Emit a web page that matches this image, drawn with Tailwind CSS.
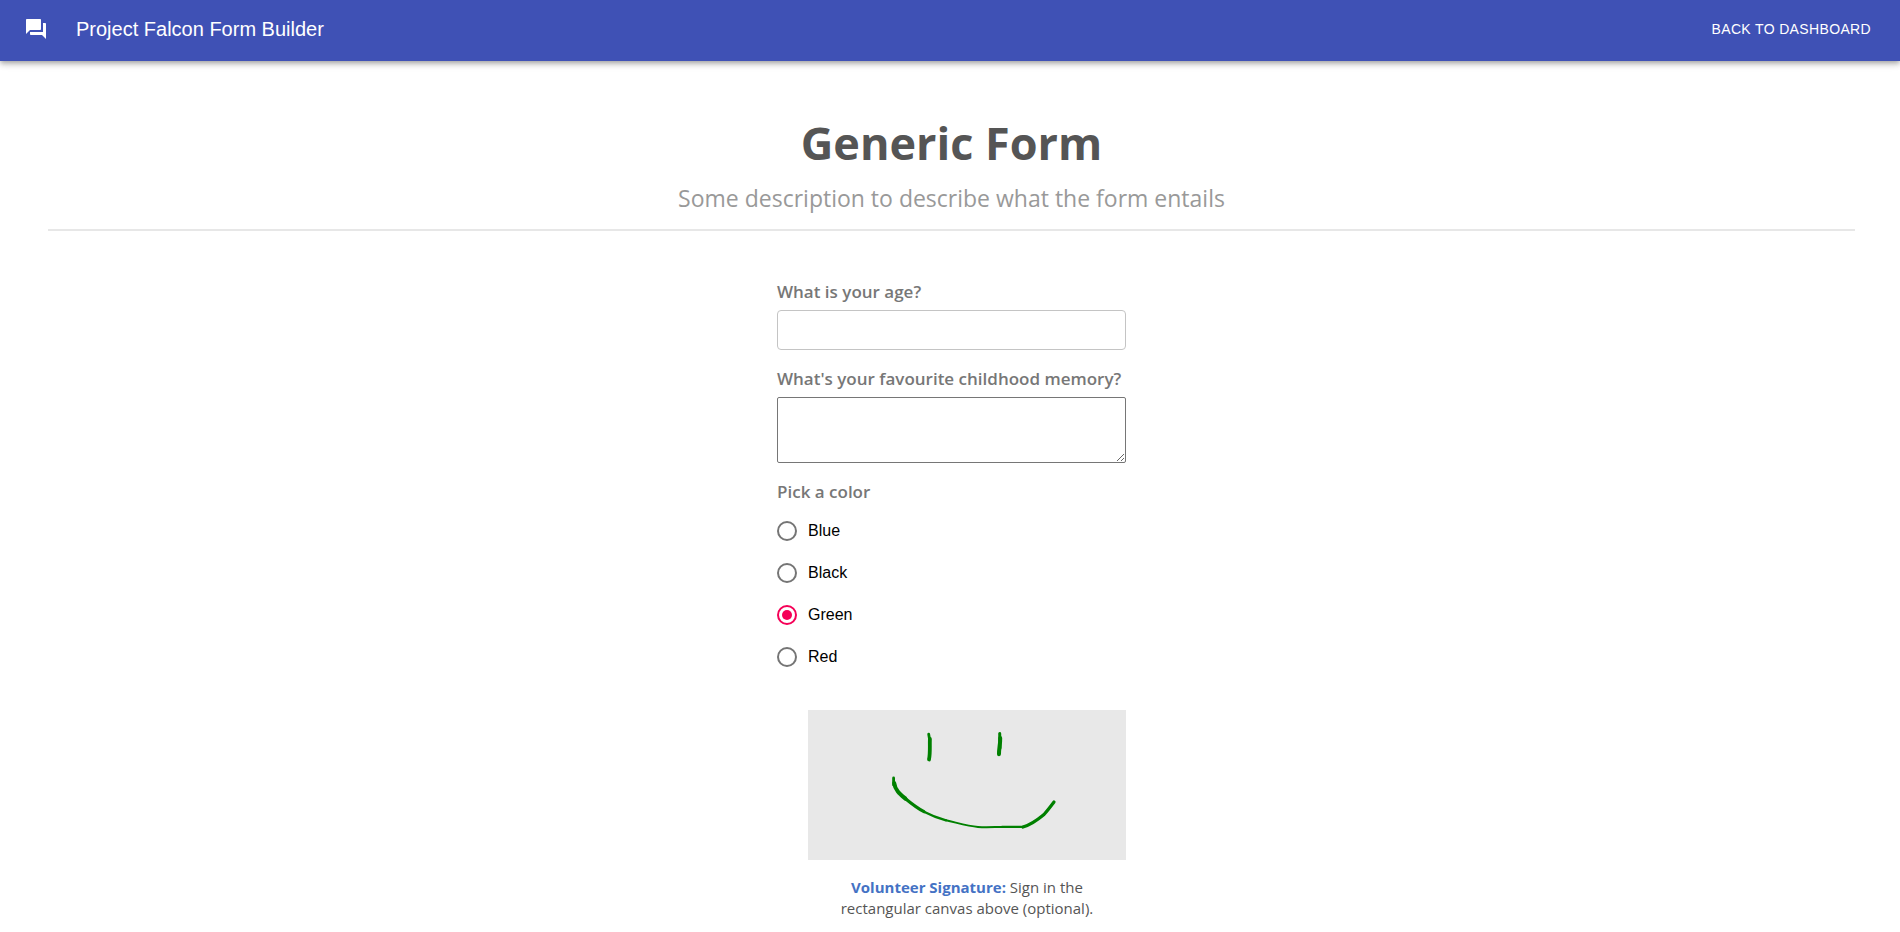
<!DOCTYPE html>
<html lang="en">
<head>
<meta charset="utf-8">
<meta name="viewport" content="width=device-width, initial-scale=1">
<title>Project Falcon Form Builder</title>
<script src="https://cdn.jsdelivr.net/npm/@tailwindcss/browser@4"></script>
</head>
<body class="bg-white font-['Open_Sans','Noto_Sans',sans-serif]">
  <header class="flex h-[61px] items-center bg-[#3f51b5] pr-[29px] pb-1 pl-6 font-['Liberation_Sans',Arial,sans-serif] text-white shadow-[0_2px_4px_-1px_rgba(0,0,0,0.2),0_4px_5px_0_rgba(0,0,0,0.14),0_1px_10px_0_rgba(0,0,0,0.12)]">
    <svg class="size-6" viewBox="0 0 24 24" fill="currentColor" aria-hidden="true"><path d="M21 6h-2v9H6v2c0 .55.45 1 1 1h11l4 4V7c0-.55-.45-1-1-1zm-4 6V3c0-.55-.45-1-1-1H3c-.55 0-1 .45-1 1v14l4-4h10c.55 0 1-.45 1-1z"/></svg>
    <span class="ml-7 text-xl">Project Falcon Form Builder</span>
    <a href="#" class="ml-auto text-sm tracking-wide uppercase">Back to Dashboard</a>
  </header>
  <main class="pr-[45px] pl-12">
    <div class="border-b-2 border-[#e7e7e7] pt-[54px] pb-[15px] text-center">
      <h1 class="text-[45px] leading-[56px] font-bold text-[#555555]">Generic Form</h1>
      <p class="mt-[11px] text-[23px] leading-8 text-[#999999]">Some description to describe what the form entails</p>
    </div>
    <form class="mx-auto flex w-[349px] flex-col pt-[49px]">
      <label for="age" class="text-[17px] leading-6 font-semibold whitespace-nowrap text-[#777777]">What is your age?</label>
      <input id="age" type="text" class="mt-1.5 h-10 rounded border border-[#c4c4c4] px-3">
      <label for="memory" class="mt-[17px] text-[17px] leading-6 font-semibold whitespace-nowrap text-[#777777]">What's your favourite childhood memory?</label>
      <textarea id="memory" class="mt-1.5 h-[66px] resize rounded-xs border border-[#767676] p-2"></textarea>
      <fieldset class="mt-[17px]">
        <legend class="text-[17px] leading-6 font-semibold text-[#777777]">Pick a color</legend>
        <div class="mt-1.5 flex flex-col font-['Liberation_Sans',Arial,sans-serif] text-base text-black">
          <label class="flex h-[42px] items-center gap-[11px]"><input type="radio" name="color" class="size-5 appearance-none rounded-full border-2 border-[#757575]">Blue</label>
          <label class="flex h-[42px] items-center gap-[11px]"><input type="radio" name="color" class="size-5 appearance-none rounded-full border-2 border-[#757575]">Black</label>
          <label class="flex h-[42px] items-center gap-[11px]"><input type="radio" name="color" checked class="size-5 appearance-none rounded-full border-2 border-[#f50057] bg-[#f50057] bg-clip-content p-[3px]">Green</label>
          <label class="flex h-[42px] items-center gap-[11px]"><input type="radio" name="color" class="size-5 appearance-none rounded-full border-2 border-[#757575]">Red</label>
        </div>
      </fieldset>
      <figure class="mt-8 ml-[31px]">
        <svg class="h-[150px] w-full bg-[#e8e8e8]" viewBox="0 0 318 150" fill="none" stroke="#008000" stroke-linecap="round" stroke-linejoin="round" role="img" aria-label="Signature">
          <path stroke-width="2.8" d="M120.7 24.2L121.5 29"/>
          <path stroke-width="3.8" d="M121.9 29C121.6 36 122.4 43 121 49.5"/>
          <path stroke-width="3" d="M191.7 23.5L192 38"/>
          <path stroke-width="4" d="M192.2 28C192.4 34 190.8 39 191 44.2"/>
          <path stroke-width="2.8" d="M85.6 68V75"/>
          <path stroke-width="4" d="M86.2 73C87 80 92 84 97.5 88.7"/>
          <path stroke-width="3.2" d="M97.5 88.7C104 94 109 98 116 101.7"/>
          <path stroke-width="2.4" d="M116 101.7Q126 107 138 110.3"/>
          <path stroke-width="2" d="M138 110.3C150 113 160 116 170 117C180 117.8 188 116.8 200 116.9"/>
          <path stroke-width="2.2" d="M194 116.9L215.5 116.9"/>
          <path stroke-width="3.2" d="M215 117C224 114.5 230 109.5 236 104.5Q240 100 246 92"/>
        </svg>
        <figcaption class="mt-[17px] px-6 text-center text-[15px] leading-[21px] text-[#555555]"><b class="text-[#4472c4]">Volunteer Signature:</b> Sign in the rectangular canvas above (optional).</figcaption>
      </figure>
    </form>
  </main>
</body>
</html>
